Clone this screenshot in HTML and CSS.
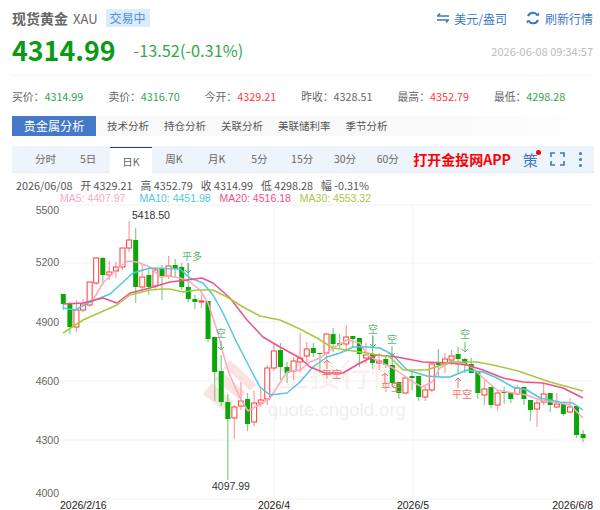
FILE: index.html
```html
<!DOCTYPE html>
<html lang="zh-CN">
<head>
    <meta charset="UTF-8">
    <title>现货黄金 XAU</title>
    <link rel="stylesheet" href="styles.css">
</head>
<body>
    <div class="page">
        <div class="head-row">
            <div class="name">
                <strong>现货黄金</strong>
                <span class="code">XAU</span>
                <span class="tag">交易中</span>
            </div>
            <div class="head-links">
                <a class="link">
                    <svg width="12" height="10" viewBox="0 0 12 10"><path d="M3 0.5 0.6 3H12M9 9.5 11.4 7H0" fill="none" stroke="#3b78c4" stroke-width="1.6"/></svg>
                    美元/盎司
                </a>
                <a class="link">
                    <svg width="14" height="14" viewBox="0 0 14 14"><path d="M2 5.2A5.3 5.3 0 0 1 11.4 4M12 8.8A5.3 5.3 0 0 1 2.6 10" fill="none" stroke="#3b78c4" stroke-width="2"/><path d="M9.5 4.8h3.7V1.2zM4.5 9.2H.8v3.6z" fill="#3b78c4"/></svg>
                    刷新行情
                </a>
            </div>
        </div>

        <div class="price-row">
            <span class="price">4314.99</span>
            <span class="change">-13.52(-0.31%)</span>
            <span class="time">2026-06-08 09:34:57</span>
        </div>

        <div class="stats">
            <div>买价：<span class="down">4314.99</span></div>
            <div>卖价：<span class="down">4316.70</span></div>
            <div>今开：<span class="up">4329.21</span></div>
            <div>昨收：4328.51</div>
            <div>最高：<span class="up">4352.79</span></div>
            <div>最低：<span class="down">4298.28</span></div>
        </div>

        <div class="tabs">
            <div class="tab active">贵金属分析</div>
            <div class="tab">技术分析</div>
            <div class="tab">持仓分析</div>
            <div class="tab">关联分析</div>
            <div class="tab">美联储利率</div>
            <div class="tab">季节分析</div>
        </div>

        <div class="periods">
            <div class="period">分时</div>
            <div class="period">5日</div>
            <div class="period current">日K</div>
            <div class="period">周K</div>
            <div class="period">月K</div>
            <div class="period">5分</div>
            <div class="period">15分</div>
            <div class="period">30分</div>
            <div class="period">60分</div>
            <div class="app">打开金投网APP</div>
            <div class="ce">策<i class="dot"></i></div>
            <svg class="full" width="15" height="14" viewBox="0 0 15 14"><path d="M1 5V1h4M10 1h4v4M14 9v4h-4M5 13H1V9" fill="none" stroke="#3b78c4" stroke-width="1.6"/></svg>
            <div class="more"><i></i><i></i><i></i></div>
        </div>

        <div class="ohlc">
            <span>2026/06/08</span><span>开 4329.21</span><span>高 4352.79</span><span>收 4314.99</span><span>低 4298.28</span><span>幅 -0.31%</span>
        </div>
        <div class="ma">
            <span class="ma5">MA5: 4407.97</span>
            <span class="ma10">MA10: 4451.98</span>
            <span class="ma20">MA20: 4516.18</span>
            <span class="ma30">MA30: 4553.32</span>
        </div>

        <div class="chart">
            <svg id="kline" width="600" height="306" viewBox="0 204 600 306"></svg>
        </div>
    </div>
    <script src="chart.js"></script>
</body>
</html>
```
FILE: styles.css
```css
body {
    margin: 0;
    background: #fff;
    font-family: "Noto Sans CJK SC", "Noto Sans", sans-serif;
    font-size: 11px;
    color: #666;
}
.page {
    width: 600px;
    height: 510px;
    overflow: hidden;
}
.head-row {
    display: flex;
    justify-content: space-between;
    align-items: center;
    height: 26px;
    margin-top: 5px;
    padding: 0 7px 0 12px;
}
.name {
    display: flex;
    align-items: center;
}
.name strong {
    font-size: 14px;
    color: #666;
}
.code {
    margin-left: 5px;
    font-size: 13px;
}
.tag {
    margin-left: 8px;
    padding: 0 4px;
    line-height: 18px;
    height: 18px;
    background: #dcecfb;
    color: #4a90e2;
    font-size: 12px;
}
.head-links {
    display: flex;
    gap: 19px;
}
.link {
    display: flex;
    align-items: center;
    gap: 5px;
    color: #3b78c4;
    font-size: 12px;
}
.price-row {
    display: flex;
    align-items: center;
    box-sizing: border-box;
    height: 45px;
    padding-bottom: 7px;
    margin: 0 6px 0 12px;
    border-bottom: 1px solid #f3f3f3;
}
.price {
    font-size: 26.8px;
    font-weight: 700;
    color: #0a9a14;
}
.change {
    margin-left: 18px;
    font-size: 16.3px;
    color: #35a64c;
}
.time {
    margin: 2px 1px 0 auto;
    color: #bbb;
}
.stats {
    display: grid;
    grid-template-columns: repeat(6, 96.4px);
    height: 40px;
    align-items: center;
    padding-left: 12px;
    font-size: 10.8px;
}
.up { color: #ff3b3b; }
.down { color: #2ea84a; }
.tabs {
    display: flex;
    height: 20px;
    margin: 0 6px 0 12px;
    background: linear-gradient(to right, #f9f9f9 75%, #fff);
}
.tab {
    line-height: 20px;
    margin-left: 15px;
    color: #555;
    font-size: 10.5px;
}
.tab.active {
    width: 84px;
    margin: 0 -4px 0 0;
    text-align: center;
    background: #4479c8;
    color: #fff;
    font-size: 12.2px;
}
.periods {
    display: flex;
    align-items: center;
    height: 26px;
    margin: 10px 6px 0 12px;
    padding-left: 12px;
    background: #eef4fc;
    border-bottom: 1px solid #e3ebf5;
}
.period {
    width: 42.8px;
    text-align: center;
    line-height: 26px;
    color: #666;
    font-size: 10.5px;
}
.period.current {
    height: 25px;
    margin-bottom: -2px;
    background: #fff;
    border-top: 1px solid #26406e;
    line-height: 27px;
}
.app {
    margin-left: 4px;
    font-size: 14px;
    font-weight: 700;
    color: #f00;
}
.ce {
    position: relative;
    margin-left: 12px;
    font-size: 15px;
    color: #3b78c4;
}
.dot {
    position: absolute;
    top: 1px;
    right: -3px;
    width: 5px;
    height: 5px;
    border-radius: 50%;
    background: #f00;
}
.full {
    margin-left: 12px;
}
.more {
    display: flex;
    flex-direction: column;
    gap: 3px;
    margin-left: 14px;
}
.more i {
    width: 3px;
    height: 3px;
    background: #3b78c4;
    border-radius: 50%;
}
.ohlc {
    display: flex;
    gap: 8px;
    padding-left: 16px;
    margin-top: 3px;
    line-height: 18px;
    font-size: 10.8px;
    color: #555;
}
.ma {
    display: flex;
    gap: 9px;
    padding-left: 60px;
    line-height: 12px;
    margin-top: -2px;
    font-size: 10.5px;
    font-family: "Liberation Sans", sans-serif;
}
.ma5 { color: #ffa6c0; margin-right: 5px; }
.ma10 { color: #4fc8e0; }
.ma20 { color: #f0508a; }
.ma30 { color: #a8c840; }
.chart svg {
    display: block;
    font-family: "Liberation Sans", sans-serif;
}
.grid {
    stroke: #f2f2f2;
    stroke-width: 1;
}
.axis {
    font-size: 10.5px;
    fill: #666;
}
.date {
    font-size: 10.5px;
    fill: #222;
}
.peak {
    font-size: 10.5px;
    fill: #333;
}
.line {
    fill: none;
    stroke-width: 1.5;
    stroke-linejoin: round;
}
.wick-g { stroke: #7fd07f; stroke-width: 1.2; }
.wick-r { stroke: #ff9c9c; stroke-width: 1.2; }
.body-g { fill: #0aa60a; }
.body-r { fill: #fff; stroke: #ff3b3b; stroke-width: 1; }
.mark {
    font-family: "Noto Sans CJK SC", sans-serif;
    font-size: 10px;
}
.mark-g { fill: #5fb57a; stroke: #5fb57a; }
.mark-r { fill: #f2706c; stroke: #f2706c; }
.mark text { stroke: none; }
.mark line { stroke-width: 1; }
.wm-text {
    font-family: "Noto Sans CJK SC", sans-serif;
    font-size: 31px;
    fill: #fdeeec;
}
.wm-url {
    font-size: 18.5px;
    fill: #efefef;
}
.wm-logo { fill: #fbe3df; }
.wm-cut { fill: none; stroke: #fff; stroke-width: 5; }
```
FILE: chart.js
```js
// [wick top, body top, body bottom, wick bottom, 1 = red]
var candles = [
    [294, 294, 304, 310, 0], [302, 304, 327, 334, 0], [300, 310, 327, 332, 1], [299, 304, 310, 312, 1],
    [282, 282, 305, 307, 1], [257, 258, 283, 285, 1], [257, 258, 275, 285, 0], [261, 272, 275, 280, 1],
    [262, 267, 271, 278, 1], [248, 248, 267, 270, 1], [221, 240, 248, 252, 1], [228, 240, 287, 303, 0],
    [263, 277, 287, 290, 1], [268, 275, 287, 295, 0], [268, 270, 286, 290, 1], [265, 268, 276, 300, 0],
    [256, 266, 276, 279, 1], [259, 265, 269, 277, 0], [263, 267, 287, 290, 0], [263, 287, 299, 302, 0],
    [295, 299, 302, 309, 0], [295, 301, 302, 308, 1], [301, 301, 339, 342, 0], [337, 337, 372, 401, 0],
    [355, 371, 402, 406, 0], [394, 402, 419, 480, 0], [405, 407, 418, 439, 1], [382, 401, 406, 410, 1],
    [393, 399, 424, 431, 0], [391, 403, 422, 426, 1], [388, 400, 403, 407, 1], [365, 368, 399, 405, 1],
    [344, 351, 368, 371, 1], [343, 350, 367, 380, 0], [362, 367, 373, 383, 0], [357, 361, 371, 380, 1],
    [333, 358, 362, 372, 1], [342, 349, 356, 362, 1], [343, 348, 353, 357, 0], [353, 353, 354, 373, 0],
    [333, 334, 353, 360, 1], [328, 334, 344, 352, 0], [334, 343, 345, 348, 0], [325, 337, 344, 352, 1],
    [336, 336, 339, 348, 0], [338, 338, 354, 367, 0], [343, 355, 358, 363, 1], [335, 354, 363, 369, 0],
    [353, 361, 363, 370, 1], [357, 359, 365, 368, 0], [353, 365, 383, 387, 0], [382, 382, 393, 399, 0],
    [377, 378, 393, 394, 1], [370, 376, 378, 390, 0], [376, 376, 397, 401, 0], [385, 390, 397, 401, 1],
    [363, 364, 390, 392, 1], [349, 363, 365, 377, 0], [353, 359, 364, 373, 1], [350, 356, 360, 365, 1],
    [347, 354, 359, 373, 0], [358, 359, 365, 373, 0], [358, 364, 373, 373, 0], [372, 372, 393, 399, 0],
    [380, 389, 395, 405, 1], [387, 387, 405, 408, 0], [390, 393, 405, 411, 1], [387, 392, 393, 404, 0],
    [392, 392, 399, 403, 0], [385, 388, 394, 395, 1], [387, 387, 399, 405, 0], [400, 400, 410, 421, 0],
    [400, 403, 409, 427, 1], [383, 394, 402, 405, 1], [393, 393, 405, 412, 0], [393, 404, 407, 408, 1],
    [404, 404, 414, 416, 0], [398, 407, 412, 413, 1], [406, 406, 435, 438, 0], [430, 434, 438, 442, 0]
];

var lines = [
    ["#ffa6c0", "83,305 93,300 103,283 113,273 122,265 128,261 137,262 150,267 160,277 168,276 180,278 190,282 200,290 208,303 217,330 225,360 229,373 240,398 248,411 262,403 270,398 287,372 300,370 310,362 320,358 333,348 347,340 360,343 367,355 380,362 393,368 403,375 413,382 422,387 432,382 440,368 450,362 463,363 473,368 483,378 497,390 513,393 527,395 540,400 553,402 570,405 583,418"],
    ["#4fc8e0", "63,308 75,310 90,302 110,294 122,283 133,273 150,268 180,269 190,278 203,283 213,295 223,313 237,343 252,372 260,387 270,395 287,393 300,382 313,367 327,357 340,353 353,347 367,347 380,348 393,355 407,370 427,376 440,377 450,377 467,370 483,372 497,378 513,387 527,390 540,398 560,402 573,403 583,410"],
    ["#f0508a", "63,304 83,303 103,298 117,303 130,293 150,288 170,282 187,280 202,278 213,283 230,298 247,320 263,337 280,347 300,358 310,367 325,373 343,373 360,363 377,355 397,357 423,362 450,363 467,365 483,370 503,378 523,382 543,383 563,388 583,398"],
    ["#a8c840", "63,333 83,320 117,305 130,295 150,290 163,289 170,289 183,292 197,290 213,290 227,297 243,307 260,316 280,320 300,329 317,338 333,348 367,353 390,357 403,370 427,370 450,362 477,362 493,365 518,371 550,382 583,391"]
];

// [label, x, y, colour class, arrow x, arrow top, arrow bottom]
var marks = [
    ["平多", 192, 260, "mark-g", 188, 263, 273],
    ["空", 221, 337, "mark-g", 221, 341, 350],
    ["空", 373, 333, "mark-g", 373, 336, 347],
    ["空", 392, 343, "mark-g", 392, 346, 356],
    ["空", 465, 338, "mark-g", 465, 342, 352],
    ["平空", 332, 378, "mark-r", 327, 360, 369],
    ["平空", 391, 391, "mark-r", 385, 373, 383],
    ["平空", 462, 398, "mark-r", 458, 378, 388]
];

var html = "";

function text(cls, x, y, str, anchor) {
    html += '<text class="' + cls + '" x="' + x + '" y="' + y + '" text-anchor="' + (anchor || "start") + '">' + str + "</text>";
}

[205, 263, 322, 381, 440, 499].forEach(function (y) {
    html += '<line class="grid" x1="60" x2="594" y1="' + y + '" y2="' + y + '"/>';
});
[274, 413].forEach(function (x) {
    html += '<line class="grid" x1="' + x + '" x2="' + x + '" y1="205" y2="499"/>';
});

// watermark sits under the candles
html += '<path class="wm-logo" d="M230 360 257 385 223 410 203 394z"/>';
html += '<path class="wm-cut" d="M212 380 240 404M224 370 248 392"/>';
text("wm-text", 278, 386, "金投行情");
text("wm-url", 268, 416, "quote.cngold.org");

[["5500", 214], ["5200", 266], ["4900", 326], ["4600", 385], ["4300", 444], ["4000", 497]].forEach(function (a) {
    text("axis", 59, a[1], a[0], "end");
});
[["2026/2/16", 60, "start"], ["2026/4", 274, "middle"], ["2026/5", 413, "middle"], ["2026/6/8", 593, "end"]].forEach(function (a) {
    text("date", a[1], 509, a[0], a[2]);
});

candles.forEach(function (c, i) {
    var x = 63.3 + i * 6.58;
    var kind = c[4] ? "r" : "g";
    html += '<line class="wick-' + kind + '" x1="' + x + '" x2="' + x + '" y1="' + c[0] + '" y2="' + c[3] + '"/>';
    html += '<rect class="body-' + kind + '" x="' + (x - 2.5) + '" y="' + c[1] + '" width="5" height="' + Math.max(c[2] - c[1], 1) + '"/>';
});

lines.forEach(function (l) {
    html += '<polyline class="line" stroke="' + l[0] + '" points="' + l[1] + '"/>';
});

marks.forEach(function (m) {
    var down = m[3] === "mark-g";
    var tip = down ? m[6] : m[5];
    var dir = down ? -3 : 3;
    html += '<g class="mark ' + m[3] + '">';
    html += '<line x1="' + m[4] + '" x2="' + m[4] + '" y1="' + m[5] + '" y2="' + m[6] + '"/>';
    html += '<polyline fill="none" points="' + (m[4] - 3) + "," + (tip + dir) + " " + m[4] + "," + tip + " " + (m[4] + 3) + "," + (tip + dir) + '"/>';
    html += '<text x="' + m[1] + '" y="' + m[2] + '" text-anchor="middle">' + m[0] + "</text></g>";
});

text("peak", 132, 219, "5418.50");
text("peak", 212, 490, "4097.99");

document.getElementById("kline").innerHTML = html;
```
